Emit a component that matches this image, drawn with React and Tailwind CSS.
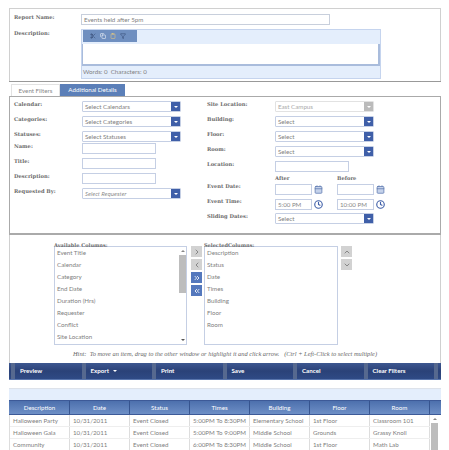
import { Scissors, Copy, Clipboard, ChevronsRight, ChevronsLeft, ChevronLeft, ChevronRight, ChevronUp, ChevronDown, Calendar, Clock, Filter } from "lucide-react";

const leftCols = ["Event Title", "Calendar", "Category", "End Date", "Duration (Hrs)", "Requester", "Conflict", "Site Location"];
const rightCols = ["Description", "Status", "Date", "Times", "Building", "Floor", "Room"];
const actions = ["Preview", "Export", "Print", "Save", "Cancel", "Clear Filters"];
const headers = ["Description", "Date", "Status", "Times", "Building", "Floor", "Room"];
const rows = [
  ["Halloween Party", "10/31/2011", "Event Closed", "5:00PM To 8:30PM", "Elementary School", "1st Floor", "Classroom 101"],
  ["Halloween Gala", "10/31/2011", "Event Closed", "5:00PM To 9:00PM", "Middle School", "Grounds", "Grassy Knoll"],
  ["Community", "10/31/2011", "Event Closed", "6:00PM To 8:30PM", "Middle School", "1st Floor", "Math Lab"],
];

function Label({ children, className = "" }) {
  return <div className={`font-['DejaVu_Serif',serif] font-bold text-[5.2px] leading-[8px] text-[#6b6b6b] ${className}`}>{children}</div>;
}

function Select({ text, italic, disabled }) {
  return (
    <div className={`w-[99px] h-[11px] flex border rounded-[1px] bg-white ${disabled ? "border-[#e2e2e2]" : "border-[#c5cfe4]"}`}>
      <div className={`flex-1 pl-[2px] leading-[10px] ${disabled ? "text-[#aaa]" : "text-[#808080]"} ${italic ? "italic font-['Open_Sans',sans-serif] text-[5.8px]" : "text-[6.2px]"}`}>{text}</div>
      <div className={`w-[9px] flex items-center justify-center ${disabled ? "bg-[#bbb]" : "bg-[#3f5fa8]"}`}>
        <div className="w-0 h-0 border-x-[2px] border-x-transparent border-t-[2px] border-t-white"></div>
      </div>
    </div>
  );
}

function Input({ w = "w-[74px]", text }) {
  return <div className={`${w} h-[11px] border border-[#c5cfe4] bg-white pl-[2px] text-[6.2px] leading-[10px] text-[#888]`}>{text}</div>;
}

function Row({ label, children, h = "h-[15px]" }) {
  return (
    <div className={`flex ${h}`}>
      <Label className="w-[68px]">{label}</Label>
      <div className="mt-[1px] flex">{children}</div>
    </div>
  );
}

function DatePair({ icon: Icon, iconClass, stroke = 2, a, b }) {
  return (
    <div className="flex items-center h-[12px]">
      <Input w="w-[37px]" text={a} />
      <Icon size={9} strokeWidth={stroke} className={`ml-[2px] ${iconClass}`} />
      <div className="w-[14px]"></div>
      <Input w="w-[37px]" text={b} />
      <Icon size={9} strokeWidth={stroke} className={`ml-[2px] ${iconClass}`} />
    </div>
  );
}

function MoveBtn({ icon: Icon, blue }) {
  return (
    <div className={`w-[11px] h-[11px] flex items-center justify-center ${blue ? "bg-[#5478bd] text-white" : "bg-[#d2d2d2] text-[#777]"}`}>
      <Icon size={8} strokeWidth={2.5} />
    </div>
  );
}

export default function App() {
  return (
    <div className="w-[449px] h-[450px] overflow-hidden bg-white pt-[8px] pl-[9px] font-['Lato',sans-serif]">
      <div className="w-[432px]">
        {/* report header */}
        <div className="h-[73px] border-t border-l border-r border-[#d0d0d0] pt-[5px] pl-[4px]">
          <div className="flex h-[15px]">
            <Label className="w-[67px] mt-[-1px]">Report Name:</Label>
            <div className="w-[249px] h-[11px] border border-[#c8cfdc] pl-[2px] text-[6.2px] leading-[10px] text-[#808080]">Events held after 5pm</div>
          </div>
          <div className="flex">
            <Label className="w-[67px]">Description:</Label>
            <div className="w-[300px] h-[50px] border border-[#c5d4ee] bg-[#e4eefc] flex flex-col">
              <div className="h-[14px] flex items-start">
                <div className="ml-[1px] w-[54px] h-[12px] bg-[#6f8fc0] flex items-center gap-[4px] pl-[7px] text-[#33476e]">
                  <Scissors size={6} />
                  <Copy size={6} className="text-white" />
                  <Clipboard size={6} className="text-[#f0cf7a]" />
                  <Filter size={6} />
                </div>
              </div>
              <div className="h-[23px] bg-white border-r-2 border-b-2 border-l border-[#a9bcdc]"></div>
              <div className="flex-1 pl-[1px] text-[6.2px] leading-[12px] text-[#808080]">Words: 0 &nbsp;Characters: 0</div>
            </div>
          </div>
        </div>

        {/* tabs */}
        <div className="h-[15px] border-t border-[#999] pt-[1px] pl-[2px] flex items-end text-[6.2px] leading-[12px] text-center">
          <div className="w-[49px] h-[12px] bg-white border border-b-0 border-[#e2e2e2] text-[#888]">Event Filters</div>
          <div className="w-[65px] h-[12px] bg-[#5b7fb8] text-white">Additional Details</div>
        </div>

        {/* filters */}
        <div className="h-[139px] border border-[#aaa] border-b-2 flex pt-[3px] pl-[4px]">
          <div className="w-[193px]">
            <Row label="Calendar:"><Select text="Select Calendars" /></Row>
            <Row label="Categories:"><Select text="Select Categories" /></Row>
            <Row label="Statuses:" h="h-[12px]"><Select text="Select Statuses" /></Row>
            <Row label="Name:"><Input /></Row>
            <Row label="Title:"><Input /></Row>
            <Row label="Description:"><Input /></Row>
            <Row label="Requested By:"><Select text="Select Requester" italic /></Row>
          </div>
          <div>
            <Row label="Site Location:"><Select text="East Campus" disabled /></Row>
            <Row label="Building:"><Select text="Select" /></Row>
            <Row label="Floor:"><Select text="Select" /></Row>
            <Row label="Room:"><Select text="Select" /></Row>
            <Row label="Location:" h="h-[14px]"><Input /></Row>
            <div className="flex h-[8px] pl-[68px]">
              <Label className="w-[62px]">After</Label>
              <Label>Before</Label>
            </div>
            <Row label="Event Date:"><DatePair icon={Calendar} iconClass="text-[#5a76ad] fill-[#c5d2ea]" /></Row>
            <Row label="Event Time:"><DatePair icon={Clock} stroke={3} iconClass="text-[#3f5fa8]" a="5:00 PM" b="10:00 PM" /></Row>
            <Row label="Sliding Dates:"><Select text="Select" /></Row>
          </div>
        </div>

        {/* column pickers */}
        <div className="h-[128px] border-l border-r border-[#d0d0d0] pl-[44px] pt-[6px]">
          <div className="flex">
            <div className="w-[133px]">
              <Label className="h-[5px] text-[5px] leading-[4px]">Available Columns:</Label>
              <div className="h-[99px] border border-[#c5cfe4] flex text-[6.2px] leading-[12px] text-[#808080]">
                <div className="flex-1 pl-[2px]">
                  {leftCols.map((c) => <div key={c}>{c}</div>)}
                </div>
                <div className="w-[7px] flex flex-col items-center">
                  <div className="h-[8px] pt-[3px]">
                    <div className="w-0 h-0 border-x-[2px] border-x-transparent border-b-[2px] border-b-[#888]"></div>
                  </div>
                  <div className="w-full h-[38px] bg-[#bdbdbd]"></div>
                  <div className="mt-auto mb-[3px] w-0 h-0 border-x-[2px] border-x-transparent border-t-[2px] border-t-[#555]"></div>
                </div>
              </div>
            </div>
            <div className="w-[11px] ml-[4px] mt-[5px] flex flex-col gap-[2px]">
              <MoveBtn icon={ChevronRight} />
              <MoveBtn icon={ChevronLeft} />
              <MoveBtn icon={ChevronsRight} blue />
              <MoveBtn icon={ChevronsLeft} blue />
            </div>
            <div className="w-[134px] ml-[2px]">
              <Label className="h-[5px] text-[5px] leading-[4px]">SelectedColumns:</Label>
              <div className="h-[99px] border border-[#c5cfe4] pl-[2px] text-[6.2px] leading-[12px] text-[#808080]">
                {rightCols.map((c) => <div key={c}>{c}</div>)}
              </div>
            </div>
            <div className="w-[11px] ml-[3px] mt-[5px] flex flex-col gap-[2px]">
              <MoveBtn icon={ChevronUp} />
              <MoveBtn icon={ChevronDown} />
            </div>
          </div>
          <div className="font-['Liberation_Serif',serif] italic text-[6.4px] leading-[8px] mt-[5px] ml-[19px] text-[#666] whitespace-pre">Hint:  To move an item, drag to the other window or highlight it and click arrow.   (Ctrl + Left-Click to select multiple)</div>
        </div>

        {/* action bar */}
        <div className="h-[17px] bg-gradient-to-b from-[#3d5790] via-[#2b4278] to-[#2f4a85] border-b border-[#5a76ad] flex pl-[2px] items-stretch">
          {actions.map((a) => (
            <div key={a} className="w-[70.5px] flex items-center border-l-[4px] border-[#56698f] pl-[5px] text-[6.2px] font-bold text-white">
              {a}
              {a === "Export" && <span className="ml-[4px] w-0 h-0 border-x-[2px] border-x-transparent border-t-[2px] border-t-white"></span>}
            </div>
          ))}
          <div className="w-[4px] bg-[#56698f]"></div>
        </div>

        <div className="h-[9px] border-b border-[#dde2ea]"></div>
        <div className="h-[11px] bg-[#e4eefc]"></div>

        {/* results */}
        <div className="flex h-[15px] pl-[1px] bg-gradient-to-b from-[#4d70ad] to-[#6d8fc6] border-t border-b border-[#3d5a98] text-[6.2px] leading-[13px] text-white text-center">
          {headers.map((h) => <div key={h} className="w-[60px] border-r border-[#36548f]">{h}</div>)}
        </div>
        <div className="flex">
          <div className="w-[421px] border-l border-[#ddd] text-[6.2px] leading-[12px] text-[#808080]">
            {rows.map((r) => (
              <div key={r[0]} className="flex h-[12px] border-b border-[#eee]">
                {r.map((v, i) => <div key={i} className="w-[60px] pl-[3px] whitespace-nowrap overflow-hidden border-r border-[#ddd]">{v}</div>)}
              </div>
            ))}
          </div>
          <div className="w-[7px] ml-[1px] flex flex-col items-center">
            <div className="h-[8px] pt-[3px]">
              <div className="w-0 h-0 border-x-[2px] border-x-transparent border-b-[2px] border-b-[#888]"></div>
            </div>
            <div className="w-[7px] h-[30px] bg-[#bdbdbd]"></div>
          </div>
        </div>
      </div>
    </div>
  );
}
